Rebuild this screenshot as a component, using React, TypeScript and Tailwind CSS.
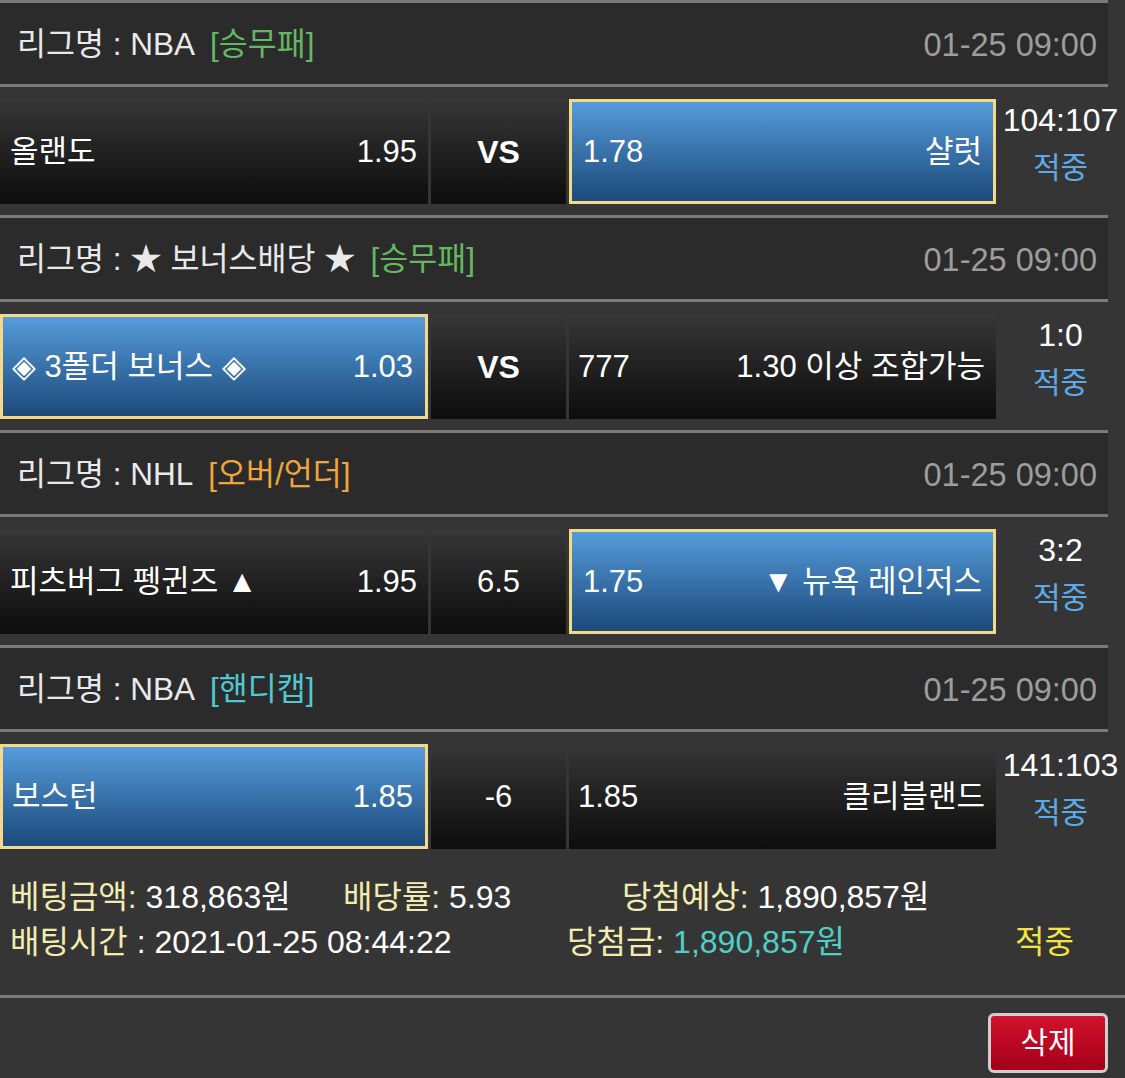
const MATCHES = [
  {
    league: "NBA",
    tag: "[승무패]",
    tagColor: "text-[#63b95f]",
    date: "01-25 09:00",
    home: "올랜도",
    homeOdds: "1.95",
    mid: "VS",
    midBold: true,
    away: "샬럿",
    awayOdds: "1.78",
    pick: "away",
    score: "104:107",
  },
  {
    league: "★ 보너스배당 ★",
    tag: "[승무패]",
    tagColor: "text-[#63b95f]",
    date: "01-25 09:00",
    home: "◈ 3폴더 보너스 ◈",
    homeOdds: "1.03",
    mid: "VS",
    midBold: true,
    away: "1.30 이상 조합가능",
    awayOdds: "777",
    pick: "home",
    score: "1:0",
  },
  {
    league: "NHL",
    tag: "[오버/언더]",
    tagColor: "text-[#f0a43a]",
    date: "01-25 09:00",
    home: "피츠버그 펭귄즈 ▲",
    homeOdds: "1.95",
    mid: "6.5",
    midBold: false,
    away: "▼ 뉴욕 레인저스",
    awayOdds: "1.75",
    pick: "away",
    score: "3:2",
  },
  {
    league: "NBA",
    tag: "[핸디캡]",
    tagColor: "text-[#4fc9cf]",
    date: "01-25 09:00",
    home: "보스턴",
    homeOdds: "1.85",
    mid: "-6",
    midBold: false,
    away: "클리블랜드",
    awayOdds: "1.85",
    pick: "home",
    score: "141:103",
  },
];

const FONT = "font-['Liberation_Sans','Noto_Sans_CJK_KR',sans-serif]";

const cellBase = "mt-[12px] h-[105px] flex items-center text-[31px] leading-none text-white";
const plain = "bg-linear-to-b from-[#373737] to-[#0d0d0d]";
const picked = "bg-linear-to-b from-[#569cdb] to-[#1c4a7b] border-[3px] border-[#f3d98c]";

function Line({ full = false }: { full?: boolean }) {
  return <div className={`h-[3px] bg-[#7a7a7a] ${full ? "w-full" : "w-[1108px]"}`} />;
}

export default function App() {
  return (
    <div className={`${FONT} w-[1125px] h-[1078px] bg-[#353535] overflow-hidden`}>
      {MATCHES.map((m, idx) => {
        const homePicked = m.pick === "home";
        const awayPicked = m.pick === "away";
        return (
          <div key={idx}>
            <Line />
            {/* league header */}
            <div className="w-[1108px] h-[81px] bg-[#2b2b2b] flex items-center justify-between pl-[17px] pr-[11px] pt-[3px]">
              <div className="text-[31.5px] leading-none text-[#e9e9e9] flex items-center">
                <span>리그명 : {m.league}</span>
                <span className={`ml-[15px] ${m.tagColor}`}>{m.tag}</span>
              </div>
              <span className="text-[32.5px] leading-none text-[#9d9d9d]">{m.date}</span>
            </div>
            <Line />
            {/* match row */}
            <div className={`flex items-start ${idx === MATCHES.length - 1 ? "h-[118px]" : "h-[128px]"}`}>
              <div
                className={`${cellBase} w-[428px] justify-between ${
                  homePicked ? `${picked} pl-[9px] pr-[12px]` : `${plain} pl-[10px] pr-[11px]`
                }`}
              >
                <span>{m.home}</span>
                <span>{m.homeOdds}</span>
              </div>
              <div
                className={`${cellBase} ${plain} w-[135px] ml-[3px] justify-center ${
                  m.midBold ? "font-bold text-[32px]" : ""
                }`}
              >
                {m.mid}
              </div>
              <div
                className={`${cellBase} w-[427px] ml-[3px] justify-between ${
                  awayPicked ? `${picked} pl-[11px] pr-[11px]` : `${plain} pl-[9px] pr-[11px]`
                }`}
              >
                <span>{m.awayOdds}</span>
                <span>{m.away}</span>
              </div>
              <div className="flex-1 mt-[9px] flex flex-col items-center text-[32px] leading-[48px]">
                <span className="text-white">{m.score}</span>
                <span className="text-[#5ea9e6] text-[30px]">적중</span>
              </div>
            </div>
          </div>
        );
      })}

      {/* bet summary */}
      <div className="pt-[25px] pb-[30px] pl-[10px] text-[32px] leading-[45px] text-white">
        <div className="flex">
          <span className="w-[333px]">
            <span className="text-[#f2ecb0]">베팅금액:</span> 318,863원
          </span>
          <span className="w-[279px]">
            <span className="text-[#f2ecb0]">배당률:</span> 5.93
          </span>
          <span>
            <span className="text-[#f2ecb0]">당첨예상:</span> 1,890,857원
          </span>
        </div>
        <div className="flex">
          <span className="w-[557px]">
            <span className="text-[#f2ecb0]">배팅시간</span> : 2021-01-25 08:44:22
          </span>
          <span className="w-[448px]">
            <span className="text-[#f2ecb0]">당첨금:</span>{" "}
            <span className="text-[#4fcfc6]">1,890,857원</span>
          </span>
          <span className="text-[#f3e343]">적중</span>
        </div>
      </div>
      <Line full />
      <div className="flex justify-end pt-[15px] pr-[17px]">
        <button
          type="button"
          className="w-[120px] h-[60px] rounded-[6px] border-[3px] border-[#cfcfcf] bg-linear-to-b from-[#d3122d] to-[#a3001a] text-white text-[30px] leading-none flex items-center justify-center"
        >
          삭제
        </button>
      </div>
    </div>
  );
}
